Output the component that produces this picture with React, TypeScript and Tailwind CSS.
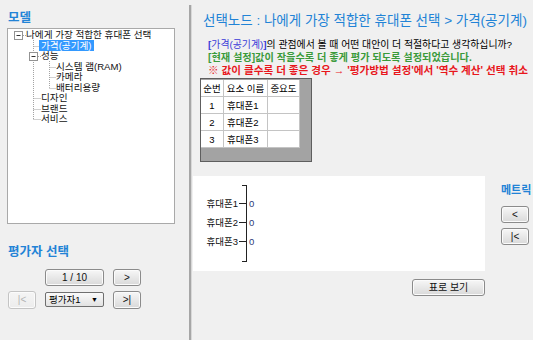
import React from "react";

const FONT = "font-['Liberation_Sans','Noto_Sans_CJK_KR',sans-serif]";

function Btn({ children, className = "", disabled = false }: { children: React.ReactNode; className?: string; disabled?: boolean }) {
  return (
    <div
      className={
        "flex items-center justify-center rounded-[3px] border bg-gradient-to-b shadow-[inset_0_0_0_1px_#fbfbfb] text-[10px] leading-none " +
        (disabled
          ? "border-[#c4c4c4] from-[#f5f5f5] to-[#ececec] text-[#b4b4b4] "
          : "border-[#8b8b8b] from-[#f7f7f7] to-[#d9d9d9] text-[#111] ") +
        className
      }
    >
      {children}
    </div>
  );
}

const treeRows = [
  { label: "나에게 가장 적합한 휴대폰 선택", pl: "pl-[18px]" },
  { label: "가격(공기계)", pl: "pl-[31px]", selected: true },
  { label: "성능", pl: "pl-[33px]" },
  { label: "시스템 램(RAM)", pl: "pl-[48px]" },
  { label: "카메라", pl: "pl-[48px]" },
  { label: "배터리용량", pl: "pl-[48px]" },
  { label: "디자인", pl: "pl-[33px]" },
  { label: "브랜드", pl: "pl-[33px]" },
  { label: "서비스", pl: "pl-[33px]" },
];

function TreeLines() {
  const c = (i: number) => 1 + i * 10.5 + 5.25;
  const dot = { stroke: "#a3a3a3", strokeWidth: 1, strokeDasharray: "1 1" };
  return (
    <svg className="absolute inset-0 pointer-events-none" width="166" height="194">
      {/* root children */}
      <line x1="25.5" y1="11" x2="25.5" y2={c(8)} {...dot} />
      {[1, 6, 7, 8].map((i) => (
        <line key={i} x1="25.5" y1={Math.round(c(i)) + 0.5} x2={i === 1 ? 31 : 33} y2={Math.round(c(i)) + 0.5} {...dot} />
      ))}
      {/* performance children */}
      <line x1="41.5" y1="32" x2="41.5" y2={c(5)} {...dot} />
      {[3, 4, 5].map((i) => (
        <line key={i} x1="41.5" y1={Math.round(c(i)) + 0.5} x2="48" y2={Math.round(c(i)) + 0.5} {...dot} />
      ))}
      <line x1="15" y1="6.5" x2="18" y2="6.5" {...dot} />
      <line x1="30" y1="27.5" x2="33" y2="27.5" {...dot} />
      {/* expanders */}
      <rect x="6.5" y="2.5" width="8" height="8" fill="#fff" stroke="#939393" />
      <line x1="8.5" y1="6.5" x2="12.5" y2="6.5" stroke="#333" />
      <rect x="21.5" y="23.5" width="8" height="8" fill="#fff" stroke="#939393" />
      <line x1="23.5" y1="27.5" x2="27.5" y2="27.5" stroke="#333" />
    </svg>
  );
}

function Chart() {
  const rows = [
    { label: "휴대폰1", y: 27 },
    { label: "휴대폰2", y: 46 },
    { label: "휴대폰3", y: 65 },
  ];
  return (
    <svg width="292" height="95" className="block">
      <line x1="53.5" y1="9" x2="53.5" y2="86" stroke="#222" />
      <line x1="49" y1="9.5" x2="54" y2="9.5" stroke="#222" />
      <line x1="49" y1="85.5" x2="54" y2="85.5" stroke="#222" />
      {rows.map((r) => (
        <g key={r.label}>
          <line x1="46" y1={r.y + 0.5} x2="53" y2={r.y + 0.5} stroke="#222" />
          <text x="45" y={r.y + 3.5} textAnchor="end" fontSize="9.5" fill="#111" fontFamily="'Liberation Sans','Noto Sans CJK KR',sans-serif">
            {r.label}
          </text>
          <text x="56" y={r.y + 3.5} fontSize="9.5" fill="#2c3a78" fontFamily="'Liberation Sans','Noto Sans CJK KR',sans-serif">
            0
          </text>
        </g>
      ))}
    </svg>
  );
}

export default function App() {
  return (
    <div className={"flex h-[340px] w-[533px] overflow-hidden bg-[#f0f0f0] text-black " + FONT}>
      {/* left panel */}
      <div className="flex w-[189px] shrink-0 flex-col">
        <div className="mt-[11px] h-[15px] pl-[8px] text-[12.5px] font-bold leading-[15px] text-[#2283d6]">모델</div>
        <div className="relative ml-[7px] mt-[2px] h-[196px] w-[168px] border border-[#a9a9a9] bg-white pt-[1px]">
          <TreeLines />
          {treeRows.map((r) => (
            <div key={r.label} className={"relative flex h-[10.5px] items-center whitespace-nowrap text-[9.6px] leading-none " + r.pl}>
              {r.selected ? (
                <span className="flex h-[11px] items-center bg-[#3399ff] px-[2px] text-white">{r.label}</span>
              ) : (
                <span className="text-[#111]">{r.label}</span>
              )}
            </div>
          ))}
        </div>
        <div className="mt-[21px] h-[15px] pl-[8px] text-[12.5px] font-bold leading-[15px] text-[#2283d6]">평가자 선택</div>
        <div className="ml-[8px] mt-[9px] grid grid-cols-[28px_59px_28px] gap-x-[9px] gap-y-[5px]">
          <div />
          <Btn className="h-[17px]">1 / 10</Btn>
          <Btn className="h-[17px]">&gt;</Btn>
          <Btn className="h-[18px]" disabled>|&lt;</Btn>
          <div className="mt-[1px] flex h-[15px] items-center justify-between rounded-[2px] border border-[#6f6f6f] bg-gradient-to-b from-[#fafafa] to-[#e2e2e2] pl-[3px] pr-[5px] text-[9.5px] leading-none">
            <span>평가자1</span>
            <span className="text-[7px]">▼</span>
          </div>
          <Btn className="h-[18px]">&gt;|</Btn>
        </div>
      </div>

      {/* splitter */}
      <div className="mt-[5px] w-[3px] shrink-0 border-l-2 border-[#a6a6a6] bg-[#d8d8d8]" />

      {/* right panel */}
      <div className="flex min-w-0 flex-1 flex-col">
        <div className="mt-[13px] h-[16px] whitespace-nowrap pl-[11px] text-[13.5px] leading-[16px] text-[#2283d6]">
          선택노드 : 나에게 가장 적합한 휴대폰 선택 &gt; 가격(공기계)
        </div>
        <div className="mt-[10px] whitespace-nowrap pl-[16px] leading-[12.6px]">
          <div className="text-[9.9px]">
            <span className="font-bold text-[#3b3bd8]">[</span>
            <span className="text-[#3b3bd8]">가격(공기계)</span>
            <span className="font-bold text-[#3b3bd8]">]</span>의 관점에서 볼 때 어떤 대안이 더 적절하다고 생각하십니까?
          </div>
          <div className="text-[10.2px] font-bold text-[#3a9a3a]">[현재 설정]값이 작을수록 더 좋게 평가 되도록 설정되었습니다.</div>
          <div className="text-[10.6px] font-bold text-[#e8161c]">※ 값이 클수록 더 좋은 경우 → '평가방법 설정'에서 '역수 계산' 선택 취소</div>
        </div>

        {/* grid */}
        <div className="ml-[8px] mt-[1.5px] h-[84px] w-[112px] border border-[#5e5e5e] bg-[#a3a3a3] pt-[1px]">
          <div className="grid w-[99px] grid-cols-[23px_44px_32px] text-[9.5px] leading-none">
            {[
              ["순번", "요소 이름", "중요도"],
              ["1", "휴대폰1", ""],
              ["2", "휴대폰2", ""],
              ["3", "휴대폰3", ""],
            ].map((row, ri) =>
              row.map((cell, ci) => (
                <div
                  key={ri + "-" + ci}
                  className={
                    "flex h-[17px] items-center whitespace-nowrap border-b border-r border-[#c4c4c4] bg-white " +
                    (ci === 1 && ri > 0 ? "pl-[3px]" : "justify-center")
                  }
                >
                  {cell}
                </div>
              ))
            )}
          </div>
        </div>

        <div className="mt-[14px] flex">
          <div className="flex w-[293px] shrink-0 flex-col items-end">
            <div className="ml-[1px] h-[95px] w-[292px] bg-white">
              <Chart />
            </div>
            <Btn className="mt-[8px] h-[17px] w-[73px] text-[9.5px]">표로 보기</Btn>
          </div>
          <div className="ml-[16px] flex flex-col gap-[6px]">
            <div className="mt-[8px] h-[13px] whitespace-nowrap text-[11px] font-bold leading-[13px] text-[#2283d6]">메트릭</div>
            <Btn className="mt-[3px] h-[17px] w-[28px]">&lt;</Btn>
            <Btn className="mt-[-1px] h-[17px] w-[28px]">|&lt;</Btn>
          </div>
        </div>
      </div>
    </div>
  );
}
